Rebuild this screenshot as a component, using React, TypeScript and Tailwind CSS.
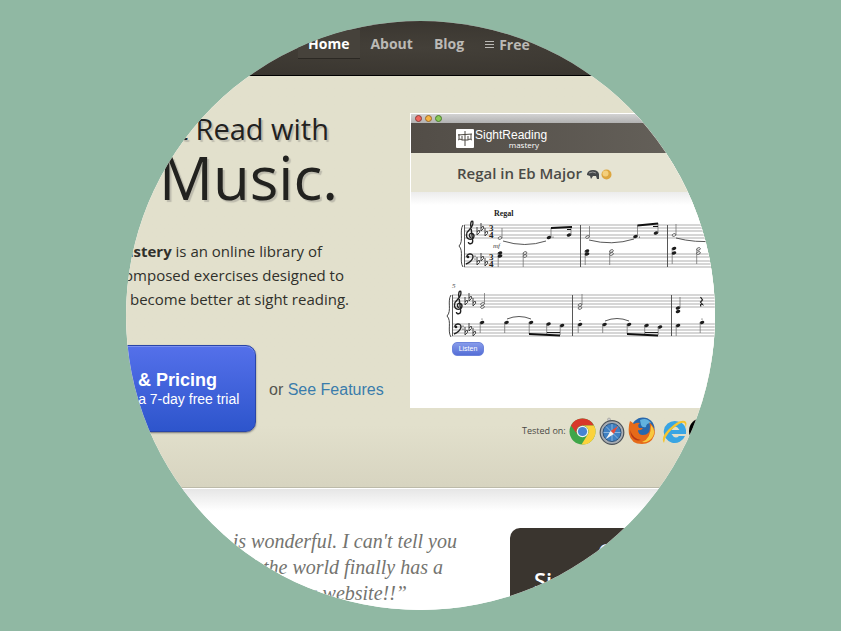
import React from "react";

type Point = { x: number; y: number };

const treble = "M0 10 C-3 9 -2 4 1 5 C5 6 4 12 -1 12 C-7 11 -6 4 -2 1 C2 -3 3 -6 2 -9 C0 -10 -1 -6 0 -2 L2 14 C2 18 -3 18 -3 15";

function Staff({ x, ys }: { x: number; ys: number[] }) {
  return (
    <g stroke="#8b8b8b" strokeWidth="0.7">
      {ys.map((y) => (
        <line key={y} x1={x} x2={716} y1={y} y2={y} />
      ))}
    </g>
  );
}

function Note({ x, y, stem, side = "up", hollow }: Point & { stem?: number; side?: "up" | "down"; hollow?: boolean }) {
  const sx = side === "up" ? x + 2 : x - 1.8;
  return (
    <g>
      <ellipse
        cx={x}
        cy={y}
        rx={hollow ? 1.9 : 2.4}
        ry={hollow ? 1.2 : 1.6}
        transform={`rotate(-20 ${x} ${y})`}
        fill={hollow ? "#fff" : "#1c1c1c"}
        stroke="#333"
        strokeWidth={hollow ? 0.7 : 0}
      />
      {stem !== undefined && <line x1={sx} x2={sx} y1={y} y2={stem} stroke="#666" strokeWidth="0.7" />}
    </g>
  );
}

function Flat({ x, y }: Point) {
  return <path d={`M${x} ${y - 7} V${y + 1} Q${x + 4} ${y - 2} ${x + 2.5} ${y - 3.5} Q${x + 1} ${y - 4} ${x} ${y - 2}`} fill="none" stroke="#333" strokeWidth="0.9" />;
}

function Clefs({ x, top, bass, meter }: { x: number; top: number; bass: number; meter?: boolean }) {
  const flats = (y: number) => (
    <g>
      <Flat x={x + 13} y={y + 9} />
      <Flat x={x + 17} y={y + 5} />
      <Flat x={x + 21} y={y + 10} />
    </g>
  );
  return (
    <g>
      <path d={treble} transform={`translate(${x + 7} ${top + 4}) scale(.86)`} fill="none" stroke="#222" strokeWidth="1.6" />
      <path
        d={`M${x + 3} ${bass + 3} C${x + 2} ${bass} ${x + 9} ${bass - 2} ${x + 9} ${bass + 3} C${x + 9} ${bass + 6} ${x + 5} ${bass + 9} ${x + 2} ${bass + 10}`}
        fill="none"
        stroke="#222"
        strokeWidth="1.4"
      />
      <circle cx={x + 4} cy={bass + 3} r="1.3" fill="#222" />
      <circle cx={x + 11} cy={bass + 2} r="0.6" />
      <circle cx={x + 11} cy={bass + 5} r="0.6" />
      {flats(top)}
      {flats(bass + 1)}
      {meter && (
        <g className="fill-[#222] font-['Liberation_Serif'] text-[9px] font-bold">
          <text x={x + 25} y={top + 6}>3</text>
          <text x={x + 25} y={top + 13}>4</text>
          <text x={x + 25} y={bass + 6}>3</text>
          <text x={x + 25} y={bass + 13}>4</text>
        </g>
      )}
      <path
        d={`M${x - 1} ${top} C${x - 5} ${top + 6} ${x} ${top + 16} ${x - 5} ${top + 21} C${x} ${top + 26} ${x - 5} ${top + 36} ${x - 1} ${bass + 13}`}
        fill="none"
        stroke="#444"
        strokeWidth="1"
      />
    </g>
  );
}

function Score() {
  return (
    <svg viewBox="411 192 304 150" className="block h-[150px] w-[304px] shrink-0" role="img" aria-label="Regal in Eb Major">
      <Staff x={464} ys={[225, 228, 231, 235, 238, 254, 257, 261, 264, 267]} />
      <Staff x={452} ys={[295, 298, 301, 304, 307, 324, 327, 330, 333, 336]} />
      <g stroke="#444" strokeWidth="0.9">
        <line x1="464.5" x2="464.5" y1="225" y2="267" />
        <line x1="580.5" x2="580.5" y1="225" y2="267" />
        <line x1="667.5" x2="667.5" y1="225" y2="267" />
        <line x1="452.5" x2="452.5" y1="295" y2="336" />
        <line x1="572.5" x2="572.5" y1="295" y2="336" />
        <line x1="671.5" x2="671.5" y1="295" y2="336" />
      </g>
      <Clefs x={464} top={225} bass={254} meter />
      <Clefs x={452} top={295} bass={324} />
      <text x="494" y="216" className="fill-[#222] font-['Liberation_Serif'] text-[8px] font-bold">Regal</text>
      <text x="493" y="248" className="fill-[#444] font-['Liberation_Serif'] text-[7px] italic">mf</text>
      <text x="452" y="288" className="fill-[#444] font-['Liberation_Serif'] text-[7px] italic">5</text>

      <Note x={500} y={238} stem={228} hollow />
      <Note x={549} y={237.5} stem={228} />
      <Note x={569} y={235} stem={227} />
      <Note x={587.5} y={237} stem={226} hollow />
      <Note x={635.5} y={236.5} stem={225} />
      <Note x={656} y={233} stem={223} />
      <Note x={674} y={235} stem={224} hollow />
      <path d="M551 228 L572 227 M637.5 225.5 L658 223.5" stroke="#111" strokeWidth="1.8" />
      <path d="M567 229.5h4 M653 226.5h5" stroke="#111" strokeWidth="1.2" />
      <g fill="none" stroke="#444" strokeWidth="0.9">
        <path d="M503 241 Q525 248 546 241" />
        <path d="M589 240 Q612 246 634 239" />
        <path d="M676 238 Q695 243 716 241" />
        <path d="M507 319 Q519 314 531 319" />
        <path d="M605 321 Q617 316 629 321" />
      </g>
      <Note x={500} y={253} stem={267} side="down" />
      <Note x={500} y={256} />
      <Note x={525} y={253} stem={267} side="down" hollow />
      <Note x={525} y={256} hollow />
      <Note x={587} y={251} stem={265} side="down" />
      <Note x={587} y={254} />
      <Note x={611.5} y={251} stem={265} side="down" hollow />
      <Note x={611.5} y={254} hollow />
      <Note x={674} y={248.5} stem={264} side="down" />
      <Note x={674} y={253} />
      <Note x={698.5} y={249} stem={264} side="down" hollow />
      <Note x={698.5} y={253} hollow />

      <Note x={482.5} y={304} stem={293} hollow />
      <Note x={482.5} y={307} hollow />
      <Note x={580} y={305} stem={294} hollow />
      <Note x={580} y={308} hollow />
      <Note x={678} y={308} stem={297} />
      <Note x={678} y={311.5} />
      <path d="M700.5 297 l2 3 l-2 2 l2 2.5 q-3 -1 -1.5 2" fill="none" stroke="#222" strokeWidth="1.2" />
      {[[482, 322.5, 333], [506.5, 322.5, 333], [531, 322.5, 334], [548.5, 324, 335], [562, 325.5, 335], [580, 324.5, 333], [604.5, 324.5, 333], [629, 324.5, 334], [646.5, 325.5, 335], [660, 327, 335], [678, 325.5, 336], [702, 322.5, 333]].map(([x, y, s]) => (
        <Note key={x} x={x} y={y} stem={s} side="down" />
      ))}
      <path d="M529 334 L560 335.5 M627 334 L658 335.5" stroke="#111" strokeWidth="1.8" />
      <path d="M547 332.5 H560 M645 332.5 H658" stroke="#222" strokeWidth="1.2" />
      <g fill="#333">
        <circle cx="482" cy="319" r="0.6" />
        <circle cx="580" cy="320.5" r="0.6" />
        <circle cx="702" cy="319" r="0.6" />
        <circle cx="553" cy="237" r="0.6" />
        <circle cx="639.5" cy="237" r="0.6" />
      </g>
    </svg>
  );
}

function Browsers() {
  return (
    <div className="ml-[3px] flex shrink-0 items-center gap-[3px]">
      <svg viewBox="0 0 27 27" className="size-[27px]" aria-label="Chrome">
        <circle cx="13.5" cy="13.5" r="13" fill="#3fa648" />
        <path d="M2 7.5 A13 13 0 0 1 25 7.5 H13.5 A6 6 0 0 0 8 16 Z" fill="#d8382b" />
        <path d="M25 7.5 A13 13 0 0 1 12.5 26.5 L18.7 16.5 A6 6 0 0 0 13.5 7.5 Z" fill="#fbd23c" />
        <circle cx="13.5" cy="13.5" r="5.8" fill="#f3f3ee" />
        <circle cx="13.5" cy="13.5" r="4.6" fill="#4784d2" />
      </svg>
      <svg viewBox="0 0 26 28" className="h-7 w-[26px]" aria-label="Safari">
        <circle cx="10" cy="2.5" r="1.5" fill="#ccc" stroke="#888" strokeWidth=".5" />
        <circle cx="13" cy="15.5" r="11.8" fill="#a7adb4" stroke="#4d5359" strokeWidth="1.2" />
        <circle cx="13" cy="15.5" r="9" fill="#3f80c2" stroke="#2d5278" />
        <path d="M13 7v17M4.5 15.5h17M7 9.5l12 12M19 9.5l-12 12" stroke="#9cc3e4" strokeWidth=".8" />
        <path d="M19 9 L14.8 17 L11.5 14 Z" fill="#e64b38" />
        <path d="M7 22 L11.5 14 L14.8 17 Z" fill="#f5f5f5" />
      </svg>
      <svg viewBox="0 0 28 28" className="size-7" aria-label="Firefox">
        <circle cx="15" cy="12" r="11.5" fill="#2867ac" />
        <path d="M12 3 q7 -3 11 3 q-5 0 -5 4 q-4 1 -5 -2z" fill="#62b2df" />
        <path d="M2 4 Q4 5 6 7 Q9 5 12 6 Q9 8 11 11 L15 11 Q13 14 10 13 Q10 18 15 18 Q22 18 22 10 Q22 7 21 5 Q29 12 26 19 Q23 27 14 27 Q3 27 1 17 Q0 10 2 4Z" fill="#e56a19" />
        <path d="M23 8 Q29 14 24 21 Q20 26 14 25 Q23 22 23 8Z" fill="#f8c83f" />
        <path d="M2 13 Q5 22 13 23 Q6 25 3 18Z" fill="#b93714" />
      </svg>
      <svg viewBox="0 0 27 27" className="ml-0.5 size-[27px]" aria-label="Internet Explorer">
        <path d="M14 3 a11 11 0 1 0 10 15 h-6 q-4 4 -7.5 -2 h14.5 q1 -12 -11 -13z M10.5 12 q4 -7 8 0z" fill="#39a5e3" fillRule="evenodd" />
        <path d="M3 25 Q-1 20 8 11 Q18 1 24 3 Q27 5 24 10 Q26 2 18 6 Q4 15 3 25Z" fill="#f6c52f" />
      </svg>
      <span className="-ml-0.5 size-[26px] shrink-0 rounded-full bg-black" />
    </div>
  );
}

function Preview() {
  return (
    <div className="h-[295px] overflow-hidden border-l border-t border-white bg-white">
      <div className="flex h-[9px] items-center gap-[3px] bg-linear-to-b from-[#d2d2d2] to-[#b2b2b2] pl-1">
        <span className="size-[7px] rounded-full border border-[#8b3c38] bg-[#f0665e]" />
        <span className="size-[7px] rounded-full border border-[#9a6a2b] bg-[#f6b443]" />
        <span className="size-[7px] rounded-full border border-[#4b7c2e] bg-[#8bc957]" />
      </div>
      <div className="flex h-[30px] items-center bg-linear-to-r from-[#524d47] to-[#67635c] pl-[45px] text-white">
        <svg viewBox="0 0 18 19" className="h-[19px] w-[18px]" aria-hidden="true">
          <rect width="18" height="19" rx="1" fill="#fff" />
          <path d="M9 2v15M3 5v5M15 5v5M2 6l14 -1M2 11q2 -2 4 0h6q2 -2 4 0M6 7v4M12 7v4" stroke="#4b4740" fill="none" />
        </svg>
        <div className="flex flex-col pl-px pt-0.5">
          <span className="font-['Liberation_Sans_Narrow','Liberation_Sans',sans-serif] text-[12px] leading-3">SightReading</span>
          <span className="pr-2 text-right font-['Open_Sans',sans-serif] text-[8px] leading-[8px]">mastery</span>
        </div>
      </div>
      <div className="flex h-[39px] items-center gap-1 bg-[#e6e4d3] pl-[46px] pt-px font-['Open_Sans',sans-serif] text-[15px] font-semibold text-[#4b4b47]">
        Regal in Eb Major
        <svg viewBox="0 0 26 14" className="mt-px h-3.5 w-[26px]" aria-hidden="true">
          <path d="M1 7 Q2 3 7 3 Q12 3 13 7 L13 12 L11 12 L10 9 L7 9 L5 12 L4 9 L1 8Z" fill="#45484a" />
          <path d="M3 6q4 -2 7 0" stroke="#999" fill="none" />
          <circle cx="20.5" cy="7.5" r="5" fill="#dda63f" />
          <circle cx="19.5" cy="6.5" r="3" fill="#f4cf7b" />
        </svg>
      </div>
      <div className="bg-linear-to-b from-[#ececec] to-white to-8%">
        <Score />
        <button className="ml-[41px] block h-3.5 w-8 rounded-[5px] border border-[#6d84dc] bg-linear-to-b from-[#879bea] to-[#556ed6] text-center font-['Liberation_Sans',sans-serif] text-[7px] leading-3 text-white">
          Listen
        </button>
      </div>
    </div>
  );
}

export default function App() {
  return (
    <div className="flex min-h-screen items-center justify-center overflow-hidden bg-[#90b8a3]">
      <div className="flex size-[589px] flex-col overflow-hidden rounded-full bg-white">
        <header className="h-[55px] shrink-0 border-b border-black bg-radial from-[#444039] to-[#37332d]">
          <nav className="flex pl-[172px] pt-[9px] font-['Open_Sans',sans-serif] text-[14px] font-bold leading-7 text-[#bbb9b5]">
            <a href="#home" className="border-b border-[#2b2823] bg-[#46423b] pl-2.5 pr-[11px] text-white">Home</a>
            <a href="#about" className="pl-2.5 pr-[11px]">About</a>
            <a href="#blog" className="pl-2.5 pr-[11px]">Blog</a>
            <a href="#free" className="flex items-center gap-[5px] pl-2.5 pr-[11px]">
              <svg viewBox="0 0 9 9" className="h-[9px] w-[9px]" aria-hidden="true">
                <path d="M0 1.5h9M0 4.5h9M0 7.5h9" stroke="#bbb9b5" />
              </svg>
              Free
            </a>
          </nav>
        </header>

        <section className="flex h-[412px] shrink-0 border-b border-[#bcbaa9] bg-linear-to-b from-[#e2e0cc] from-85% to-[#d7d4c0]">
          <div className="w-[284px] shrink-0 whitespace-nowrap pt-[33px]">
            <h1 className="flex flex-col items-end font-['Open_Sans',sans-serif] text-[#22221f] [text-shadow:2px_2px_1px_#bdbbad]">
              <span className="pr-[81px] text-[29px] leading-10">Sight Read with</span>
              <span className="pr-[72px] text-[60px] leading-[56px]">Music.</span>
            </h1>
            <p className="mt-[34px] flex flex-col items-end font-['Open_Sans',sans-serif] text-[15px] leading-6 text-[#30302b]">
              <span className="pr-[88px]"><b>Mastery</b> is an online library of</span>
              <span className="pr-[66px]">composed exercises designed to</span>
              <span className="pr-[61px]">become better at sight reading.</span>
            </p>
            <div className="-ml-20 mt-[34px] flex items-center font-['Liberation_Sans',sans-serif]">
              <button className="h-[87px] w-[210px] rounded-[10px] border border-[#2945a8] bg-linear-to-b from-[#5470ea] to-[#2d55cc] text-[14px] leading-[18px] text-white shadow-[inset_0_1px_0_#7b90ef,0_1px_2px_#777]">
                <b className="block text-[18px] leading-5">Plans &amp; Pricing</b>
                Begins with a 7-day free trial
              </button>
              <p className="ml-[13px] pt-0.5 text-base text-[#55554f]">
                or <a href="#features" className="text-[#3a7cab]">See Features</a>
              </p>
            </div>
          </div>
          <div className="min-w-0 flex-1 overflow-hidden pt-[37px]">
            <Preview />
            <div className="flex items-center pl-28 pt-[9px] font-['Open_Sans',sans-serif] text-[9px] text-[#494944]">
              <span className="shrink-0">Tested on:</span>
              <Browsers />
            </div>
          </div>
        </section>

        <section className="flex flex-1 border-t border-white bg-linear-to-b from-[#e6e6e6] to-white to-18% pt-[39px]">
          <blockquote className="flex w-[384px] shrink-0 flex-col items-end whitespace-nowrap font-['Liberation_Serif',serif] text-[20px] italic leading-[26px] text-[#74746f]">
            <span className="pr-[53px]">This is wonderful. I can't tell you</span>
            <span className="pr-[67px]">that the world finally has a</span>
            <span className="pr-[103px]">reading website!!”</span>
          </blockquote>
          <aside className="min-w-0 flex-1 rounded-tl-[10px] bg-[#3a352f] pl-6 pt-[9px] font-['Open_Sans',sans-serif] text-[22px] font-semibold leading-[29px] text-white">
            <p className="pl-16">Get</p>
            <p>Sign</p>
          </aside>
        </section>
      </div>
    </div>
  );
}
